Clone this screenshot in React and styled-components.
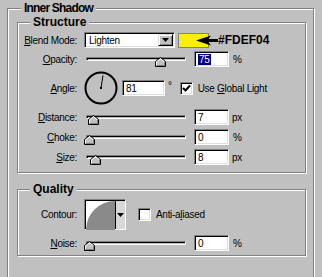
import styled, { createGlobalStyle, css } from "styled-components";

const GlobalStyle = createGlobalStyle`
  html, body {
    margin: 0;
    padding: 0;
    height: 277px;
    overflow: hidden;
    background: #c0c0c0;
  }
  body {
    font-family: "Liberation Sans", Arial, sans-serif;
    font-size: 10px;
    letter-spacing: -0.3px;
    color: #000;
  }
`;

const sunken = css`
  box-sizing: border-box;
  background: #fff;
  border: 1px solid;
  border-color: #808080 #fff #fff #808080;
  box-shadow: inset 1px 1px 0 #000, inset -1px -1px 0 #dfdfdf;
`;

const raised = css`
  box-sizing: border-box;
  background: #c0c0c0;
  border: 1px solid;
  border-color: #dfdfdf #000 #000 #dfdfdf;
  box-shadow: inset 1px 1px 0 #fff, inset -1px -1px 0 #808080;
`;

const Frame = styled.div`
  margin: ${({ $margin }) => $margin || 0};
  padding: ${({ $padding }) => $padding || 0};
  border: 1px solid #808080;
  box-shadow: inset 1px 1px 0 #fff, 1px 1px 0 #fff;
  min-height: ${({ $minHeight }) => $minHeight || "auto"};
`;

const TitleBar = styled.div`
  display: flex;
  height: 14px;
  margin-top: -8px;
  padding-left: ${({ $indent }) => $indent}px;
`;

const Title = styled.span`
  padding: 0 3px;
  background: #c0c0c0;
  font-weight: bold;
  font-size: ${({ $size }) => $size}px;
  letter-spacing: ${({ $spacing }) => $spacing || 0}px;
  line-height: 14px;
  white-space: nowrap;
`;

const Rows = styled.div`
  display: flex;
  flex-direction: column;
  gap: ${({ $gap }) => $gap}px;
  padding: ${({ $padding }) => $padding};
`;

const Row = styled.div`
  display: grid;
  grid-template-columns: 59px auto;
  column-gap: 7px;
  align-items: center;
  height: ${({ $h }) => $h}px;
`;

const Label = styled.div`
  text-align: right;
  white-space: nowrap;
`;

const Controls = styled.div`
  display: flex;
  align-items: center;
  height: 100%;
`;

const Select = styled.div`
  ${sunken};
  width: 91px;
  height: 16px;
  display: flex;
  align-items: center;
  justify-content: space-between;
  padding: 0 1px 0 4px;
`;

const DropButton = styled.div`
  ${raised};
  width: 15px;
  height: 12px;
  display: flex;
  align-items: center;
  justify-content: center;
`;

const Swatch = styled.div`
  box-sizing: border-box;
  width: 31px;
  height: 15px;
  margin-left: 3px;
  background: #fdef04;
  border: 1px solid #808080;
`;

const Arrow = styled.svg`
  margin-left: -13px;
  flex: none;
`;

const HexNote = styled.span`
  font-weight: bold;
  font-size: 12px;
  letter-spacing: 0;
`;

const SliderWrap = styled.div`
  position: relative;
  width: 104px;
  height: 16px;
  margin-right: 6px;
  flex: none;
`;

const Track = styled.div`
  box-sizing: border-box;
  margin: 6px 0 0 2px;
  width: 100px;
  height: 4px;
  border: 1px solid;
  border-color: #808080 #fff #fff #808080;
  box-shadow: inset 1px 1px 0 #000;
`;

const Thumb = styled.svg`
  position: absolute;
  top: 6px;
`;

const NumBox = styled.div`
  ${sunken};
  width: ${({ $w }) => $w || 35}px;
  height: 16px;
  margin-left: ${({ $gap }) => $gap || 0}px;
  padding-left: 3px;
  display: flex;
  align-items: center;
  flex: none;
`;

const Selected = styled.span`
  background: #000080;
  color: #fff;
  padding: 0 1px;
`;

const Unit = styled.span`
  margin-left: ${({ $gap }) => $gap}px;
`;

const Degree = styled.span`
  align-self: flex-start;
  margin: 9px 0 0 3px;
`;

const CheckBox = styled.div`
  ${sunken};
  width: 13px;
  height: 13px;
  margin-left: ${({ $gap }) => $gap}px;
  display: flex;
  align-items: center;
  justify-content: center;
  flex: none;
`;

const CheckText = styled.span`
  margin-left: 5px;
  white-space: nowrap;
`;

const ContourBox = styled.div`
  box-sizing: border-box;
  width: 42px;
  height: 31px;
  display: flex;
  border: 1px solid;
  border-color: #808080 #fff #fff #808080;
  box-shadow: inset 1px 1px 0 #000;
  padding: 1px 0 0 1px;
  flex: none;
`;

const ContourGraph = styled.svg`
  display: block;
  background: #fff;
  flex: none;
`;

const ContourDrop = styled.div`
  flex: 1;
  display: flex;
  align-items: center;
  justify-content: center;
  border-left: 1px solid #000;
  background: #d8d8d8;
`;

const Tri = () => (
  <svg width="7" height="4" viewBox="0 0 7 4">
    <polygon points="0,0 7,0 3.5,4" fill="#000" />
  </svg>
);

const Slider = ({ pos }) => (
  <SliderWrap>
    <Track />
    <Thumb width="11" height="10" viewBox="0 0 11 10" style={{ left: pos }}>
      <polygon points="0.5,9.5 0.5,4.5 5.5,0.5 10.5,4.5 10.5,9.5" fill="#c0c0c0" stroke="#000" />
      <polyline points="1.5,9 1.5,5 5.5,1.8 9,4.6" fill="none" stroke="#fff" />
      <polyline points="1.5,8.5 9.5,8.5 9.5,5" fill="none" stroke="#808080" />
    </Thumb>
  </SliderWrap>
);

const Dial = () => (
  <svg width="34" height="34" viewBox="0 0 34 34">
    <circle cx="17" cy="17" r="15.5" fill="none" stroke="#000" strokeWidth="2" />
    <line x1="17" y1="17" x2="19" y2="4.5" stroke="#000" strokeWidth="1" />
    <rect x="16" y="16" width="2" height="2" fill="#000" />
  </svg>
);

const Check = () => (
  <svg width="9" height="9" viewBox="0 0 9 9">
    <polyline points="1,4 3.5,6.5 8,1.5" fill="none" stroke="#000" strokeWidth="2" />
  </svg>
);

const SliderRow = ({ label, pos, value, unit, unitGap }) => (
  <Row $h={16}>
    <Label>{label}</Label>
    <Controls>
      <Slider pos={pos} />
      <NumBox>{value}</NumBox>
      <Unit $gap={unitGap}>{unit}</Unit>
    </Controls>
  </Row>
);

export default function App() {
  return (
    <>
      <GlobalStyle />
      <Frame $margin="8px 8px 0 7px" $padding="0 7px 0 9px" $minHeight="300px">
        <TitleBar $indent={4}>
          <Title $size={12} $spacing={-0.8}>Inner Shadow</Title>
        </TitleBar>
        <Frame $margin="7px 0 0 0">
          <TitleBar $indent={12}>
            <Title $size={12}>Structure</Title>
          </TitleBar>
          <Rows $gap={4} $padding="3px 0 7px 0">
            <Row $h={15}>
              <Label><u>B</u>lend Mode:</Label>
              <Controls>
                <Select>
                  <span>Lighten</span>
                  <DropButton><Tri /></DropButton>
                </Select>
                <Swatch />
                <Arrow width="22" height="11" viewBox="0 0 22 11">
                  <polygon points="0,5.5 15,0.5 12.5,4 22,4 22,7 12.5,7 15,10.5" fill="#000" />
                </Arrow>
                <HexNote>#FDEF04</HexNote>
              </Controls>
            </Row>
            <Row $h={16}>
              <Label><u>O</u>pacity:</Label>
              <Controls>
                <Slider pos={71} />
                <NumBox><Selected>75</Selected></NumBox>
                <Unit $gap={4}>%</Unit>
              </Controls>
            </Row>
            <Row $h={34}>
              <Label><u>A</u>ngle:</Label>
              <Controls>
                <Dial />
                <NumBox $w={43} $gap={4}>81</NumBox>
                <Degree>°</Degree>
                <CheckBox $gap={8}><Check /></CheckBox>
                <CheckText>Use <u>G</u>lobal Light</CheckText>
              </Controls>
            </Row>
            <SliderRow label={<><u>D</u>istance:</>} pos={4} value="7" unit="px" unitGap={3} />
            <SliderRow label={<><u>C</u>hoke:</>} pos={0} value="0" unit="%" unitGap={4} />
            <SliderRow label={<><u>S</u>ize:</>} pos={6} value="8" unit="px" unitGap={3} />
          </Rows>
        </Frame>
        <Frame $margin="16px 0 0 0">
          <TitleBar $indent={12}>
            <Title $size={12}>Quality</Title>
          </TitleBar>
          <Rows $gap={5} $padding="3px 0 4px 0">
            <Row $h={31}>
              <Label>Contour:</Label>
              <Controls>
                <ContourBox>
                  <ContourGraph width="29" height="29" viewBox="0 0 29 29">
                    <path d="M0,29 A29,29 0 0 1 29,0 L29,29 Z" fill="#8a8a8a" />
                  </ContourGraph>
                  <ContourDrop><Tri /></ContourDrop>
                </ContourBox>
                <CheckBox $gap={12} />
                <CheckText>Anti-a<u>l</u>iased</CheckText>
              </Controls>
            </Row>
            <SliderRow label={<><u>N</u>oise:</>} pos={0} value="0" unit="%" unitGap={4} />
          </Rows>
        </Frame>
      </Frame>
    </>
  );
}
